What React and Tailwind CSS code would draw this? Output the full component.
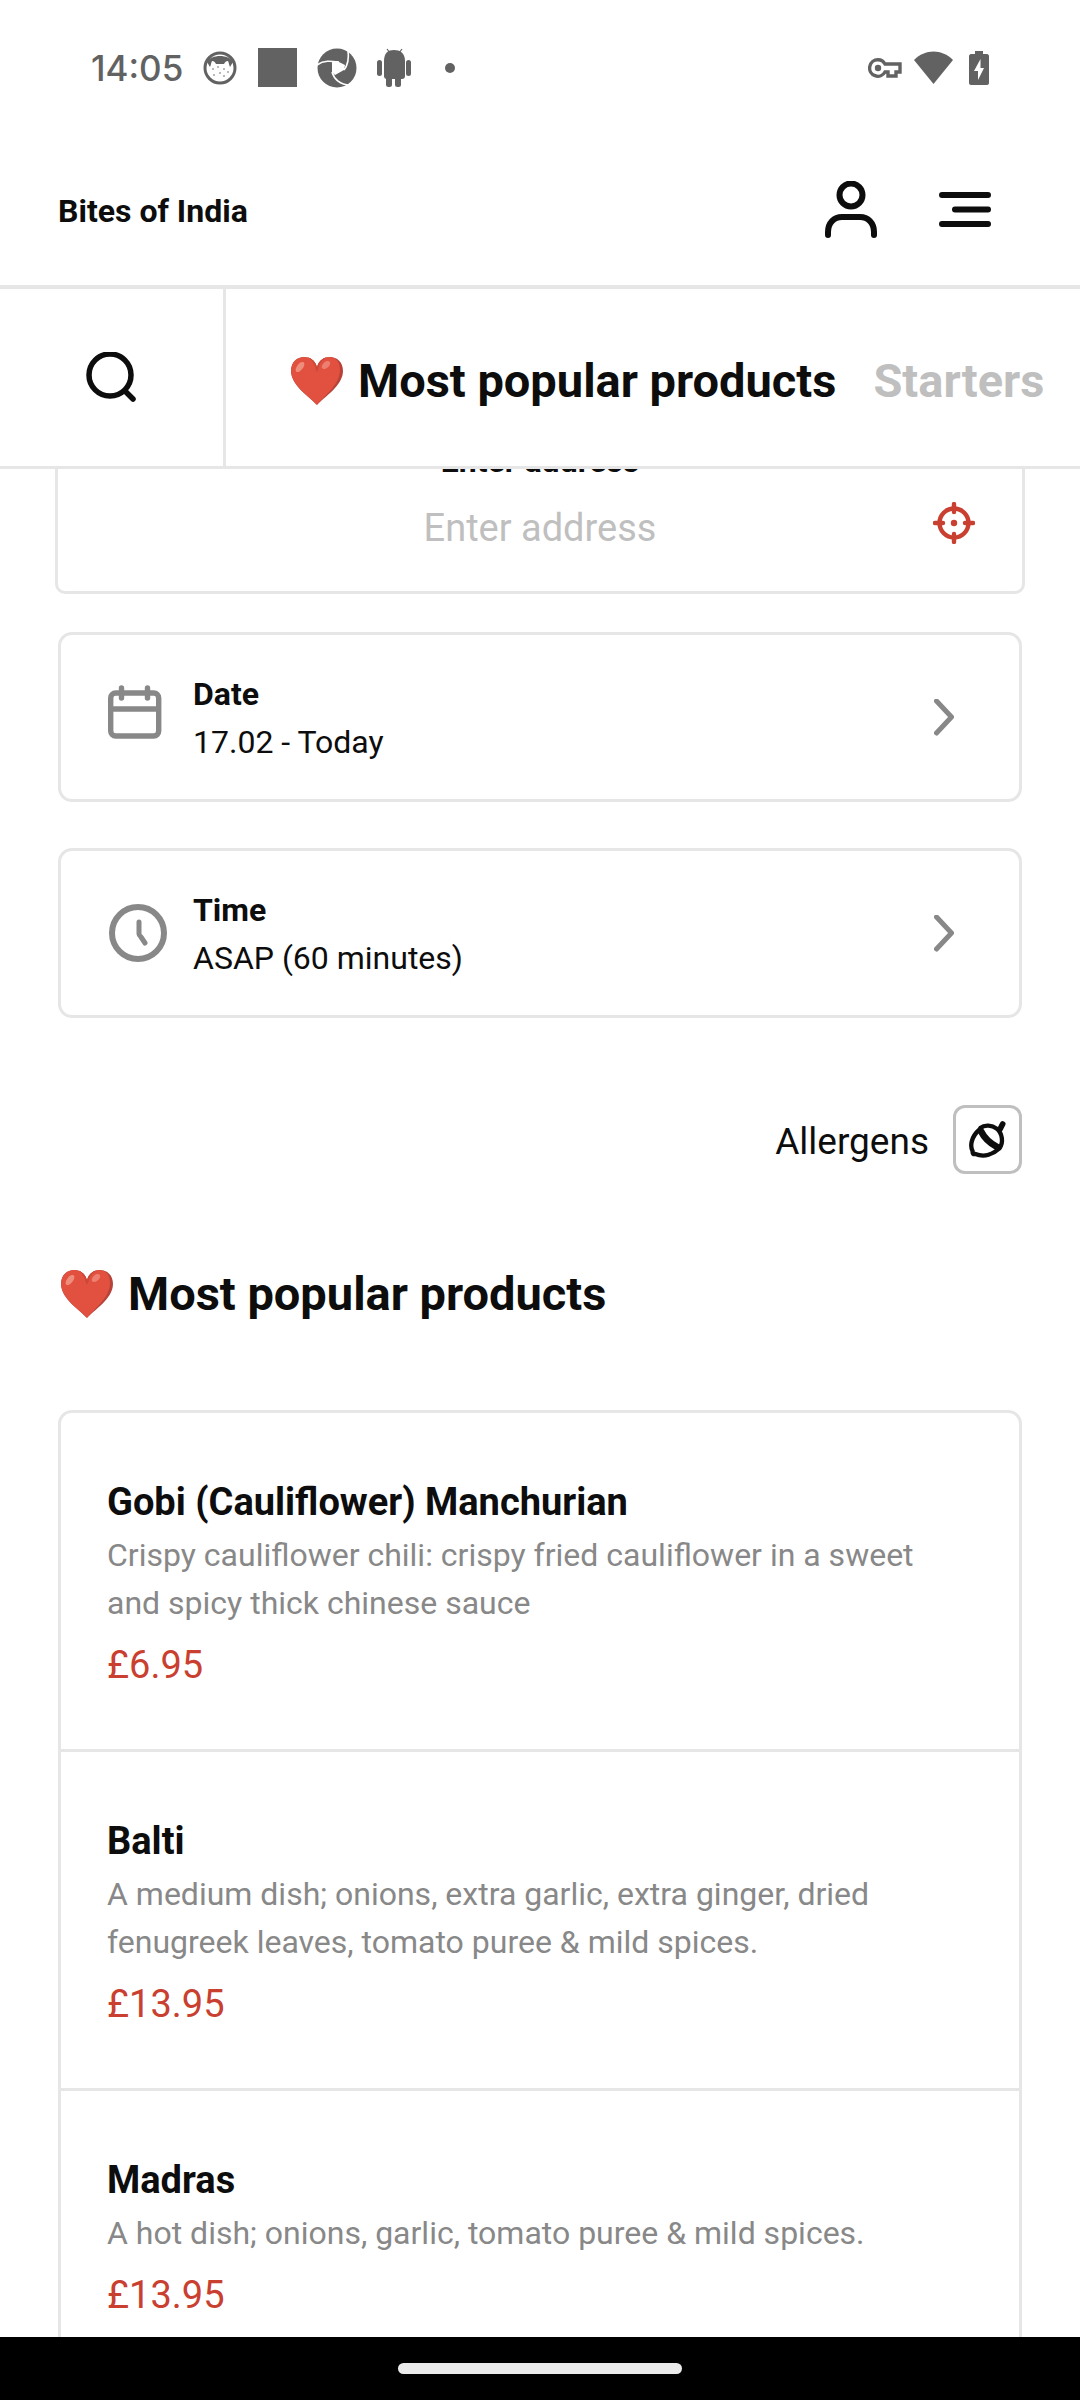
import { useId, useState } from "react";

const CATEGORIES = ["Most popular products", "Starters"];

const PRODUCTS = [
  {
    name: "Gobi (Cauliflower) Manchurian",
    description:
      "Crispy cauliflower chili: crispy fried cauliflower in a sweet and spicy thick chinese sauce",
    price: "£6.95",
  },
  {
    name: "Balti",
    description:
      "A medium dish; onions, extra garlic, extra ginger, dried fenugreek leaves, tomato puree & mild spices.",
    price: "£13.95",
  },
  {
    name: "Madras",
    description: "A hot dish; onions, garlic, tomato puree & mild spices.",
    price: "£13.95",
  },
];

function Heart() {
  const id = useId();

  return (
    <svg viewBox="0 0 52 48" className="h-12 w-[52px] shrink-0" aria-hidden="true">
      <defs>
        <clipPath id={id}>
          <path d="M26 48C20 41 0 29 0 14C0 5 6 0 13 0C19 0 24 3 26 10C28 3 33 0 39 0C46 0 52 5 52 14C52 29 32 41 26 48Z" />
        </clipPath>
      </defs>
      <g clipPath={`url(#${id})`}>
        <rect width="52" height="48" fill="#b5433a" />
        <path
          d="M26 48C20 41 0 29 0 14C0 5 6 0 13 0C19 0 24 3 26 10C28 3 33 0 38 0C45 0 49 5 49 13C49 28 32 40 26 48Z"
          fill="#e2513f"
        />
        <path d="M26 10C25 4 22 1 17 0C22 4 24 8 25 13L26 15L28 10C29 6 31 3 36 0C30 1 27 4 26 10Z" fill="#c9473b" />
        <ellipse cx="9" cy="10" rx="3" ry="6" fill="#ef8d7d" transform="rotate(38 9 10)" />
        <ellipse cx="35" cy="8" rx="3" ry="5" fill="#ec7f6f" transform="rotate(48 35 8)" />
      </g>
    </svg>
  );
}

function StatusBar() {
  return (
    <div className="flex h-[135px] shrink-0 items-center justify-between pr-[91px] pl-[91px] text-[#626262]">
      <div className="flex items-center">
        <span className="w-[112px] font-['Inter',sans-serif] text-[35px] leading-[40px] font-medium">14:05</span>

        {/* Octocat */}
        <svg viewBox="0 0 34 34" className="mr-[21px] size-[34px]" fill="currentColor">
          <circle cx="17" cy="17" r="15" fill="none" stroke="currentColor" strokeWidth="3" />
          <path d="M4 11C8 3 26 3 30 11L27 16C26 14 26 12 25 10C23 10 22 11 21 13H13C12 11 11 10 9 10C8 12 8 14 7 16Z" />
          <circle cx="10" cy="18" r="0.8" />
          <circle cx="15" cy="16" r="0.8" />
          <circle cx="21" cy="18" r="0.8" />
          <circle cx="25" cy="21" r="0.8" />
          <circle cx="17" cy="22" r="0.8" />
          <circle cx="11" cy="24" r="0.8" />
          <circle cx="21" cy="25" r="0.8" />
        </svg>

        <div className="mr-5 size-[39px] bg-[#626262]"></div>

        {/* Shutter */}
        <svg viewBox="0 0 40 40" className="mr-5 size-10">
          <circle cx="20" cy="20" r="19.5" fill="currentColor" />
          <path d="M15 14L20 13L28 17L27 22L18 27L15 24Z" fill="#fff" />
          <g fill="none" stroke="#fff" strokeWidth="1.6">
            <path d="M0 17C7 12 14 13 22 14" />
            <path d="M31 2C32 10 31 17 27 22" />
            <path d="M15 24C17 31 23 37 33 37" />
          </g>
        </svg>

        {/* Android robot */}
        <svg viewBox="0 0 34 40" className="mr-[34px] h-10 w-[34px]" fill="currentColor">
          <path d="M7 13C7 5 11 2 17 2S28 5 28 13V28C28 30 27 31 25 31H10C8 31 7 30 7 28Z" />
          <rect x="0" y="12" width="5" height="16" rx="2.5" />
          <rect x="29" y="12" width="5" height="16" rx="2.5" />
          <rect x="9" y="28" width="6" height="11" rx="2.5" />
          <rect x="18" y="28" width="6" height="11" rx="2.5" />
          <path d="M10 1L13 5M25 1L22 5" stroke="currentColor" strokeWidth="1.2" />
        </svg>

        <div className="size-[10px] rounded-full bg-[#626262]"></div>
      </div>

      <div className="flex items-center">
        {/* VPN key */}
        <svg viewBox="0 0 34 20" className="mr-3 h-5 w-[34px]">
          <path
            d="M10 1.8A8.2 8.2 0 1 0 17 14H20V18H28V14H32V6H17A8.2 8.2 0 0 0 10 1.8Z"
            fill="none"
            stroke="currentColor"
            strokeWidth="3.4"
          />
          <circle cx="10" cy="10" r="3.2" fill="currentColor" />
        </svg>
        <svg viewBox="0 0 39 33" className="mr-4 h-[33px] w-[39px]" fill="currentColor">
          <path d="M0 9C11-2.500 28-2.500 39 9L19.500 33Z" />
        </svg>
        {/* Charging battery */}
        <svg viewBox="0 0 20 34" className="h-[34px] w-5">
          <path
            d="M6 0H14V3H18C19 3 20 4 20 5V32C20 33 19 34 18 34H2C1 34 0 33 0 32V5C0 4 1 3 2 3H6Z"
            fill="currentColor"
          />
          <path d="M11.500 8L5 20H9V29L15 17H11.500Z" fill="#fff" />
        </svg>
      </div>
    </div>
  );
}

function Header() {
  return (
    <header className="flex h-[154px] shrink-0 items-center justify-between border-b-4 border-[#e6e6e6] pr-[89px] pl-[58px]">
      <a href="#home" className="pt-[2px] text-[32px] leading-[48px] font-bold">
        Bites of India
      </a>

      <div className="flex items-center gap-[62px]">
        <button type="button" aria-label="Account">
          <svg viewBox="0 0 52 58" className="h-[58px] w-[52px]" fill="none" stroke="currentColor" strokeWidth="6" strokeLinecap="round">
            <circle cx="26" cy="14" r="11.5" />
            <path d="M3 54V51C3 42 9 36 17 36H35C43 36 49 42 49 51V54" />
          </svg>
        </button>

        <button type="button" aria-label="Menu">
          <svg viewBox="0 0 52 36" className="h-9 w-[52px]" stroke="currentColor" strokeWidth="6" strokeLinecap="round">
            <path d="M3 3H49M16 17.500H49M3 32H49" />
          </svg>
        </button>
      </div>
    </header>
  );
}

function CategoryBar({ active, onSelect }) {
  return (
    <nav className="flex h-[180px] shrink-0 border-b-3 border-[#e6e6e6]">
      <button
        type="button"
        aria-label="Search"
        className="flex w-[226px] shrink-0 items-center justify-center border-r-3 border-[#e6e6e6]"
      >
        <svg viewBox="0 0 52 52" className="size-[52px]" fill="none" stroke="currentColor" strokeWidth="5.5" strokeLinecap="round">
          <circle cx="24" cy="23" r="21" />
          <path d="M39 39L47 47" />
        </svg>
      </button>

      <div className="flex items-center gap-[37px] overflow-hidden pt-[6px] pl-[65px] whitespace-nowrap">
        {CATEGORIES.map((category, index) => (
          <button
            key={category}
            type="button"
            onClick={() => onSelect(category)}
            className={`flex items-center gap-[15px] text-[47px] leading-[60px] font-bold ${
              active === category ? "text-[#0d0d0d]" : "text-[#bfbfbf]"
            }`}
          >
            {index === 0 && <Heart />}
            {category}
          </button>
        ))}
      </div>
    </nav>
  );
}

function AddressCard() {
  const [address, setAddress] = useState("");

  return (
    <div className="relative mx-[55px] rounded-[10px] border-3 border-[#e6e6e6] px-[100px] pt-[34px] pb-[34px] text-center">
      <label htmlFor="address" className="block text-[32px] leading-[48px] font-bold">
        Enter address
      </label>
      <input
        id="address"
        type="text"
        value={address}
        onChange={(e) => setAddress(e.target.value)}
        placeholder="Enter address"
        className="mt-[15px] block h-[57px] w-full text-center text-[38px] leading-[57px] outline-none placeholder:text-[#bfbfbf]"
      />
      <button type="button" aria-label="Use my location" className="absolute right-[47px] bottom-[47px] text-[#c93f30]">
        <svg viewBox="0 0 42 42" className="size-[42px]" fill="none" stroke="currentColor" strokeWidth="4.4" strokeLinecap="round">
          <circle cx="21" cy="21" r="14.5" />
          <path d="M21 2V10M21 32V40M2 21H10M32 21H40" />
          <circle cx="21" cy="21" r="3.200" fill="currentColor" stroke="none" />
        </svg>
      </button>
    </div>
  );
}

function OptionCard({ icon, label, value }) {
  return (
    <button
      type="button"
      className="flex items-center rounded-[14px] border-3 border-[#e6e6e6] pt-[35px] pr-[65px] pb-[33px] pl-[47px] text-left"
    >
      <span className="w-[85px] shrink-0 text-[#888888]">{icon}</span>

      <span className="flex-1 text-[32px] leading-[48px]">
        <span className="block font-bold">{label}</span>
        <span className="block">{value}</span>
      </span>

      <svg viewBox="0 0 20 38" className="h-[38px] w-5 text-[#888888]" fill="none" stroke="currentColor" strokeWidth="5" strokeLinecap="round" strokeLinejoin="round">
        <path d="M2.500 2L17.500 18L2.500 34" />
      </svg>
    </button>
  );
}

function CalendarIcon() {
  return (
    <svg viewBox="0 0 54 54" className="mb-3 size-[54px]" fill="none" stroke="currentColor" strokeWidth="5.4" strokeLinecap="round">
      <rect x="2.700" y="8" width="48" height="43" rx="5" />
      <path d="M3 24H50M13.500 3V13M39.500 3V13" />
    </svg>
  );
}

function ClockIcon() {
  return (
    <svg viewBox="0 0 58 58" className="mb-[2px] ml-px size-[58px]" fill="none" stroke="currentColor" strokeLinecap="round" strokeLinejoin="round">
      <circle cx="29" cy="29" r="26" strokeWidth="6" />
      <path d="M30 18V30C30 31 31 32 32 33L36 39" strokeWidth="5" />
    </svg>
  );
}

function AllergensToggle() {
  return (
    <div className="mt-[87px] flex items-center justify-end gap-[24px]">
      <span id="allergens-label" className="pt-1 text-[37px] leading-[57px]">
        Allergens
      </span>
      <button
        type="button"
        aria-labelledby="allergens-label"
        className="flex size-[69px] items-center justify-center rounded-[12px] border-3 border-[#bfbfbf]"
      >
        {/* Acorn */}
        <svg viewBox="0 0 120 120" className="size-10" fill="none" stroke="currentColor" strokeWidth="13" strokeLinecap="round" strokeLinejoin="round">
          <path d="M37 24C50 13 72 15 86 26C103 40 107 66 95 84" />
          <path d="M33 30C10 50 5 78 14 94C13 100 16 104 22 102C50 113 76 102 93 86" />
          <path d="M39 34C48 52 66 70 86 80" strokeWidth="20" />
          <path d="M96 28L104 12" strokeWidth="17" />
        </svg>
      </button>
    </div>
  );
}

function ProductItem({ name, description, price }) {
  return (
    <li className="px-[46px] pt-[61px] pb-[55px]">
      <h3 className="text-[38px] leading-[57px] font-bold">{name}</h3>
      <p className="text-[32px] leading-[48px] text-[#888888]">{description}</p>
      <p className="mt-[10px] text-[38px] leading-[57px] text-[#c93f30]">{price}</p>
    </li>
  );
}

export default function App() {
  const [category, setCategory] = useState(CATEGORIES[0]);

  return (
    <div className="flex h-screen flex-col overflow-hidden bg-white font-['Roboto',sans-serif] text-[#0d0d0d]">
      <StatusBar />
      <Header />
      <CategoryBar active={category} onSelect={setCategory} />

      <main className="min-h-0 flex-1 overflow-hidden">
        {/* The page is scrolled, so the address card slides under the bar */}
        <div className="-mt-[69px]">
          <AddressCard />

          <div className="mt-[38px] flex flex-col px-[58px]">
            <div className="flex flex-col gap-[46px]">
              <OptionCard icon={<CalendarIcon />} label="Date" value="17.02 - Today" />
              <OptionCard icon={<ClockIcon />} label="Time" value="ASAP (60 minutes)" />
            </div>

            <AllergensToggle />

            <h2 className="mt-[90px] flex items-center gap-[15px] pl-[3px] text-[47px] leading-[60px] font-bold">
              <Heart />
              Most popular products
            </h2>

            <ul className="mt-[86px] divide-y-3 divide-[#e6e6e6] rounded-[14px] border-3 border-[#e6e6e6]">
              {PRODUCTS.map((product) => (
                <ProductItem key={product.name} {...product} />
              ))}
            </ul>
          </div>
        </div>
      </main>

      {/* Gesture bar */}
      <div className="flex h-[63px] shrink-0 items-center justify-center bg-black">
        <div className="h-[11px] w-[284px] rounded-full bg-[#ebebeb]"></div>
      </div>
    </div>
  );
}
